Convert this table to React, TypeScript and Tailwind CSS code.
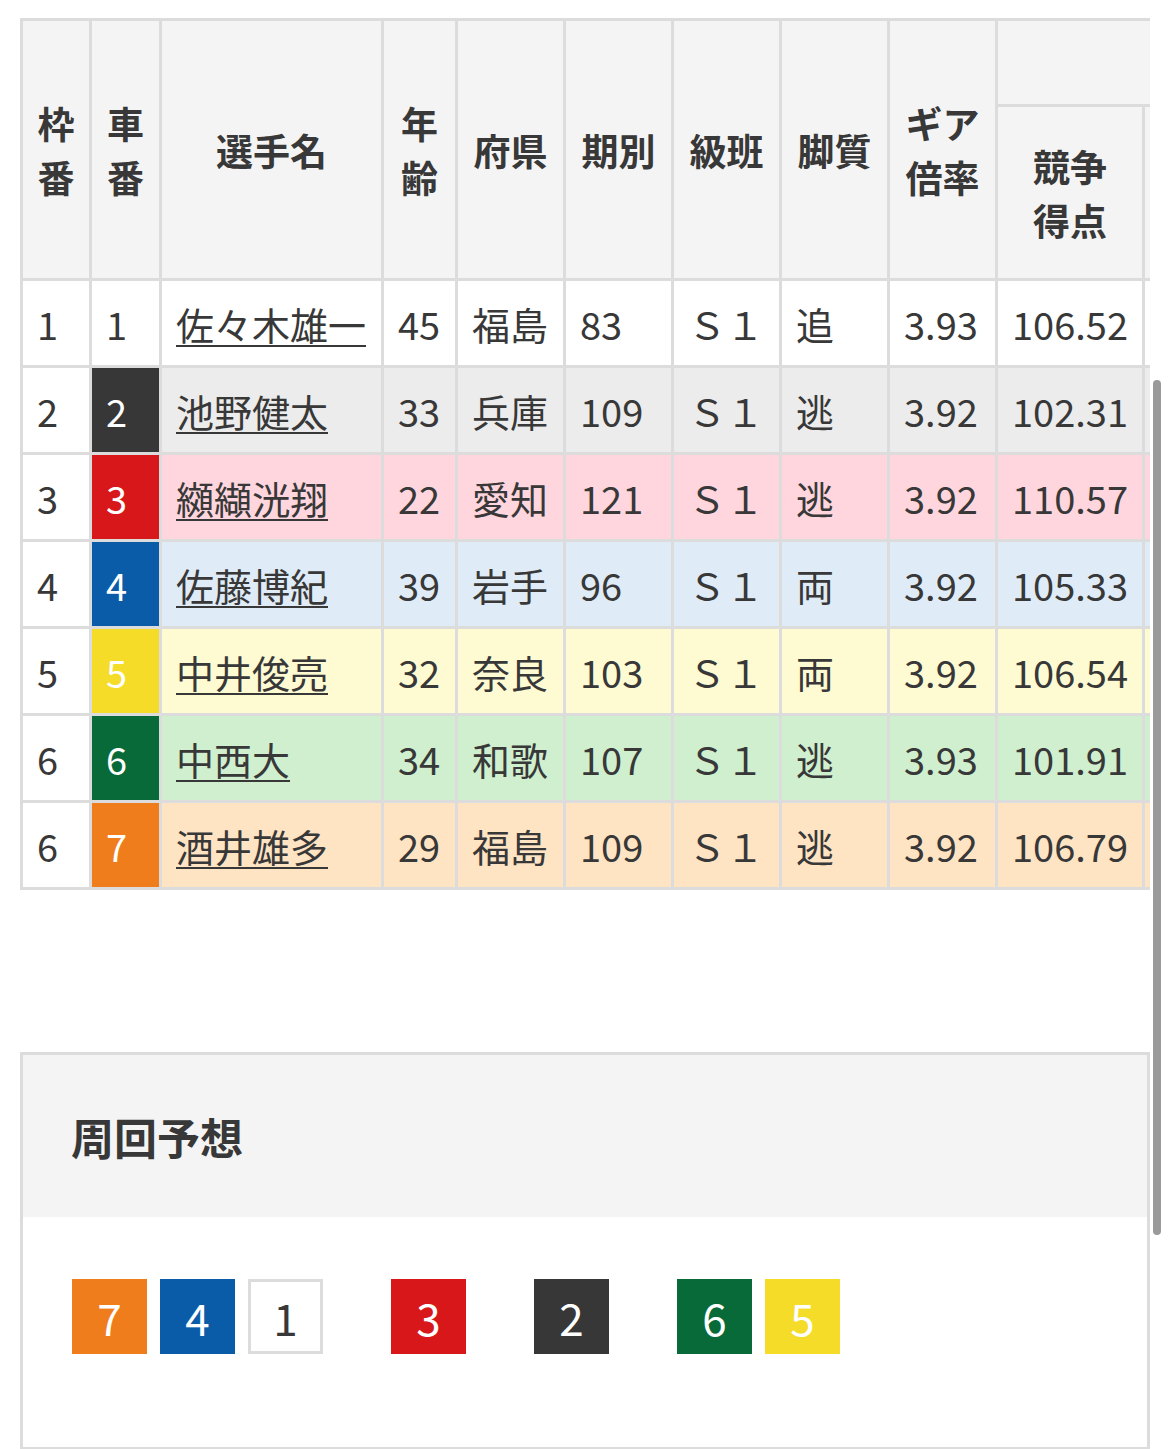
import React from "react";

type Row = {
  waku: number;
  no: number;
  name: string;
  age: number;
  pref: string;
  ki: number;
  cls: string;
  kyaku: string;
  gear: string;
  score: string;
};

const rows: Row[] = [
  { waku: 1, no: 1, name: "佐々木雄一", age: 45, pref: "福島", ki: 83, cls: "Ｓ１", kyaku: "追", gear: "3.93", score: "106.52" },
  { waku: 2, no: 2, name: "池野健太", age: 33, pref: "兵庫", ki: 109, cls: "Ｓ１", kyaku: "逃", gear: "3.92", score: "102.31" },
  { waku: 3, no: 3, name: "纐纈洸翔", age: 22, pref: "愛知", ki: 121, cls: "Ｓ１", kyaku: "逃", gear: "3.92", score: "110.57" },
  { waku: 4, no: 4, name: "佐藤博紀", age: 39, pref: "岩手", ki: 96, cls: "Ｓ１", kyaku: "両", gear: "3.92", score: "105.33" },
  { waku: 5, no: 5, name: "中井俊亮", age: 32, pref: "奈良", ki: 103, cls: "Ｓ１", kyaku: "両", gear: "3.92", score: "106.54" },
  { waku: 6, no: 6, name: "中西大", age: 34, pref: "和歌", ki: 107, cls: "Ｓ１", kyaku: "逃", gear: "3.93", score: "101.91" },
  { waku: 6, no: 7, name: "酒井雄多", age: 29, pref: "福島", ki: 109, cls: "Ｓ１", kyaku: "逃", gear: "3.92", score: "106.79" },
];

// car number colours
const carBg: Record<number, string> = {
  1: "bg-white text-[#383838]",
  2: "bg-[#373737] text-white",
  3: "bg-[#d8171b] text-white",
  4: "bg-[#0b5ca8] text-white",
  5: "bg-[#f5dc28] text-white",
  6: "bg-[#086a39] text-white",
  7: "bg-[#ef7d1b] text-white",
};

// row tint
const rowBg: Record<number, string> = {
  1: "bg-white",
  2: "bg-[#ececec]",
  3: "bg-[#ffd6de]",
  4: "bg-[#dfecf7]",
  5: "bg-[#fefbd3]",
  6: "bg-[#cfefcf]",
  7: "bg-[#ffe4c4]",
};

const th =
  "border-r-[3px] border-b-[3px] border-[#dcdcdc] bg-[#f4f4f4] px-[14px] text-center align-middle text-[37px] font-bold leading-[54px] text-[#383838]";
const td = "border-r-[3px] border-b-[3px] border-[#dcdcdc] pl-[14px] pr-[4px] text-left align-middle";

function CarBox({ n }: { n: number }) {
  const border = n === 1 ? "border-[3px] border-[#dcdcdc]" : "";
  return (
    <div className={`flex h-[75px] w-[75px] items-center justify-center text-[44px] leading-none ${carBg[n]} ${border}`}>
      {n}
    </div>
  );
}

export default function App() {
  const groups = [[7, 4, 1], [3], [2], [6, 5]];

  return (
    <div className="relative min-h-[1449px] overflow-hidden bg-white font-['Noto_Sans_CJK_JP',sans-serif] text-[#383838]">
      <div className="px-[20px] pt-[18px]">
        <div className="overflow-hidden">
          <table className="w-[1272px] table-fixed border-separate border-spacing-0 border-l-[3px] border-t-[3px] border-[#dcdcdc]">
            <colgroup>
              <col className="w-[69px]" />
              <col className="w-[70px]" />
              <col className="w-[222px]" />
              <col className="w-[74px]" />
              <col className="w-[108px]" />
              <col className="w-[108px]" />
              <col className="w-[108px]" />
              <col className="w-[108px]" />
              <col className="w-[108px]" />
              <col className="w-[147px]" />
              <col className="w-[147px]" />
            </colgroup>
            <thead>
              <tr className="h-[86px]">
                <th rowSpan={2} className={th}>枠番</th>
                <th rowSpan={2} className={th}>車番</th>
                <th rowSpan={2} className={th}>選手名</th>
                <th rowSpan={2} className={th}>年齢</th>
                <th rowSpan={2} className={th}>府県</th>
                <th rowSpan={2} className={th}>期別</th>
                <th rowSpan={2} className={th}>級班</th>
                <th rowSpan={2} className={th}>脚質</th>
                <th rowSpan={2} className={th}>ギア<br />倍率</th>
                <th colSpan={2} className={th}></th>
              </tr>
              <tr className="h-[174px]">
                <th className={th}>競争<br />得点</th>
                <th className={th}></th>
              </tr>
            </thead>
            <tbody className="text-[38px]">
              {rows.map((r) => (
                <tr key={r.no} className="h-[87px]">
                  <td className={`${td} bg-white`}>{r.waku}</td>
                  <td className={`${td} ${carBg[r.no]}`}>{r.no}</td>
                  <td className={`${td} ${rowBg[r.no]}`}>
                    <a className="underline decoration-[2px] underline-offset-[5px]">{r.name}</a>
                  </td>
                  <td className={`${td} ${rowBg[r.no]}`}>{r.age}</td>
                  <td className={`${td} ${rowBg[r.no]}`}>{r.pref}</td>
                  <td className={`${td} ${rowBg[r.no]}`}>{r.ki}</td>
                  <td className={`${td} ${rowBg[r.no]}`}>{r.cls}</td>
                  <td className={`${td} ${rowBg[r.no]}`}>{r.kyaku}</td>
                  <td className={`${td} ${rowBg[r.no]}`}>{r.gear}</td>
                  <td className={`${td} ${rowBg[r.no]}`}>{r.score}</td>
                  <td className={`${td} ${rowBg[r.no]}`}></td>
                </tr>
              ))}
            </tbody>
          </table>
        </div>

        <section className="mt-[162px] border-[3px] border-[#dcdcdc]">
          <div className="flex h-[162px] items-center bg-[#f4f4f4] pl-[48px]">
            <h2 className="text-[43px] font-bold text-[#383838]">周回予想</h2>
          </div>
          <div className="flex gap-[68px] bg-white pl-[49px] pt-[62px] pb-[93px]">
            {groups.map((g, i) => (
              <div key={i} className="flex gap-[13px]">
                {g.map((n) => (
                  <CarBox key={n} n={n} />
                ))}
              </div>
            ))}
          </div>
        </section>
      </div>

      {/* overlay scroll indicator */}
      <div className="absolute right-[9px] top-[380px] h-[855px] w-[8px] rounded-full bg-[#9a9a9a]" />
    </div>
  );
}
